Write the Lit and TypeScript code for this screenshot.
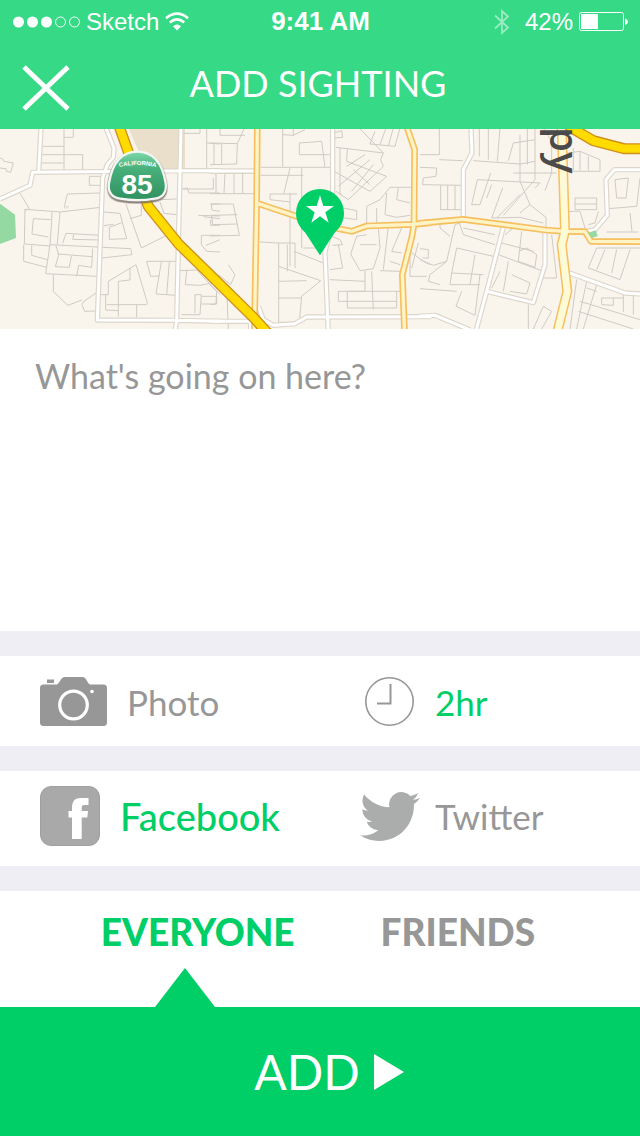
import { LitElement, html, css, svg } from "lit";
import { customElement, state } from "lit/decorators.js";

interface Tile {
  x: number;
  lanes: string;
  streets: string;
  avenues: string;
}

// Road geometry, stored per tile at three units to the pixel.
const TILES: Tile[] = [
  {
    x: 0,
    lanes: `M126 55H192M126 80H248M192 0V130M192 28H220V0M126 105H190M248 80V130
      M0 90L8 93L12 100L40 105L32 133L20 130L18 122L0 120M60 195L90 246
      M197 242L193 236L202 198L300 195M197 236L206 237
      M78 250L75 244L156 250L180 252L302 238M75 244L73 348L150 354M156 250L155 280L150 350L137 437M180 252L172 348
      M152 275L100 272L96 318L145 327M300 322L198 316L188 346M222 318L218 334L302 336
      M71 350V400L140 418M95 352V382L143 395M168 352L176 380L166 416L208 418L214 384M172 378L276 386
      M278 362L275 418L236 412L230 445M137 437L292 445M150 350L392 362L396 380L305 390
      M160 440V490L203 532L246 516M292 492L252 520L246 530L254 550L290 549
      M312 252L360 256L380 332L328 334V298L365 284M312 293L340 289
      M378 228L424 360L504 320M390 272L424 262V228
      M440 400H528M440 400L452 445L478 444M484 402L468 498L528 502M508 402L500 500
      M325 460L408 410L442 524L440 530H320M325 460V500H303M355 460V566M355 460L390 456V420M317 500V546L355 548M410 530V568
      M268 145H306M268 145V172H306M480 215L530 213M480 222L492 256L530 260
      M548 16H600V0M620 0V122M620 45L660 48M548 183L562 180L567 195H660M548 183H640V150
      M660 228H635V246L660 250M595 262L660 264M610 266L660 272M632 275V292H660
      M660 322H604V350L620 370L660 372M618 352L660 335
      M560 428L556 470L600 472L660 460M540 428L590 426L660 500M585 500H604L600 560H545M585 500V555M604 505H650V528H604`,
    streets: `M123 0L116 132M0 213L90 172L98 133L540 128H664M318 0L342 60L340 88L322 110L308 150L292 576L530 577L664 580M543 0L530 577L524 620`,
    avenues: ``,
  },
  {
    x: 210,
    lanes: `M30 0V22H105M82 47L80 108L0 110M0 45L82 47L103 0M35 48V108M12 48V108
      M18 135V195M45 135L42 195M72 135V195M98 135V195M0 136H135M0 197H135
      M0 228H70L88 322L0 324M5 262L82 260M5 262L8 290L84 288
      M218 0V115M218 20L250 22L285 5M250 22V0H370M152 118H368M152 142H280M240 120L222 195
      M268 80H360M268 80V45L335 40L345 118M275 118V360
      M180 198H262M180 198V215L240 222M240 195V415M150 342L205 345H255V420M206 345V583M280 360H330M252 370L340 405
      M206 415L332 458L275 505L268 583H206M206 510H275M232 350V430M206 460L290 458
      M372 15L395 8L398 28L375 30M378 58L520 75M390 60V200M412 62L410 100L530 145L480 190L372 130
      M378 190L415 215L520 115L512 95L520 75L448 0M480 48L495 10M480 48L555 55L570 0M510 50L528 0M535 53L550 0
      M410 115L465 80M425 190L490 110M385 175L480 95M430 125L480 170
      M375 235L440 248V275L390 268M470 290V235L510 215L540 178H605M530 195L525 260L560 268L600 262M565 178L560 215L600 225M500 240V290
      M365 325L390 335L398 350L368 352M385 350L398 420L360 425M470 320L440 325L422 378L450 428L490 422L510 360L505 298
      M535 295L520 425M450 350H500M465 428V490H385M465 460L360 455M485 430L490 545M385 490V520H560
      M412 490H575M412 490V540H560V490M510 428L570 430M575 300L545 370L575 375M540 400L570 410
      M600 370L640 400L660 410M600 375V445H650M625 345L605 420
      M0 470L20 490L18 528L0 530M55 410L75 440L62 470L25 440M50 480L55 603`,
    streets: `M0 129H135M368 0V300M362 310L345 370L355 620M0 580H122M145 535L160 575L190 592L255 587L290 567L664 566M122 580V620`,
    avenues: `M145 227L260 265L330 285L385 302L425 310L470 294L610 289L664 284M588 -10L614 65L612 289L606 325L577 440L584 620M142 -10L140 225L133 620M142 -10L140 225L133 620`,
  },
  {
    x: 420,
    lanes: `M0 80H58V0M58 95L128 98M0 118L50 120L48 145L10 150L8 170L128 172M62 172V245H128M83 172V245M105 172V245
      M178 0V85M205 0V95M240 0L232 100M160 98L300 108L345 100M265 98L280 45L345 35M300 20V160L330 230L378 268V300
      M322 0V110M345 0V155L250 262M155 230H180L212 135M155 230L172 155L360 165L345 180M200 210L215 170M300 200L230 270
      M370 0L395 40V135L375 188M280 135H410M330 230L300 255M215 270L248 180M215 270L300 268L370 285
      M440 75L480 70L540 95V130H440M460 60V128M480 70V128M505 85V128
      M445 250H480L495 300M465 210H530V245H465V210M465 228H530M505 290L525 285L535 250
      M585 155L625 150M585 155L590 210H620M625 150L618 210M660 150L650 235L565 242M630 255L636 310M560 312H655
      M660 360H530L505 420L600 455L630 365M530 425L555 365M575 435L590 365
      M60 275V300L90 325M118 285L105 290L80 400L30 440L25 460L60 470M0 395L40 412L80 400M0 362L25 365V390H8M0 482L110 490
      M130 300L225 320M118 285L130 320L225 350M110 360L220 385M110 360L95 435L90 470H180M95 435L190 440M165 380L150 470
      M125 490L108 535L165 562M180 440L165 562
      M255 320L280 300L370 310M245 345L340 370M305 310L295 400L345 418L350 380L320 360L300 368M235 380L370 430M395 320L410 450H370
      M275 440L330 465L320 498L270 490M240 430L215 480M265 400L250 490
      M325 530V603M370 535L395 550L365 603M370 535L340 603M470 455L450 603M500 460L470 603M610 498V552M545 510H610
      M545 510V530L580 532V510M475 550L640 603M480 520L660 575M640 500V560M500 480L530 490M530 470L490 603`,
    streets: `M153 0L156 75L130 125V270M252 290L200 490L165 620M200 490L340 524L375 410V306M-4 565L45 562L150 606
      M440 432L615 495L664 498M495 311L525 305L562 262L558 155L583 125H664`,
    avenues: `M-4 286L130 274L375 306L430 310L495 311L513 340L664 341`,
  },
];

const BOULEVARD = "M1685 -10L1695 310L1685 350L1702 490L1670 620";
const FREEWAY = "M352 -20L395 100L445 235L535 347L630 440L762 570L812 625M1690 -22L1715 0L1780 38L1872 62H1940";

@customElement("area-map")
class AreaMap extends LitElement {
  static styles = css`
    :host { display: block; height: 200px; background: #f9f5ed; }
    .map { display: block; width: 100%; height: 100%; }
    .line { fill: none; stroke-linejoin: round; }
    .lane { stroke: #cfcbc4; stroke-width: 3; }
    .street-edge { stroke: #ddd6ca; stroke-width: 16; }
    .street { stroke: #fff; stroke-width: 9; }
    .avenue-edge { stroke: #f6bf5f; stroke-width: 20; }
    .avenue { stroke: #fff4c6; stroke-width: 10; }
    .boulevard-edge { stroke: #f6bf5f; stroke-width: 30; }
    .boulevard { stroke: #fffad6; stroke-width: 21; }
    .freeway-edge { stroke: #cf8f1c; stroke-width: 33; }
    .freeway { stroke: #ffdb00; stroke-width: 25; }
    .park { fill: #94d8a2; }
    .block { fill: #e9dfca; }
    .place { font: 600 40px "Open Sans", "Noto Sans", sans-serif; fill: #4a4a4a; }
    .route { font: bold 84px "Liberation Sans", Arial, sans-serif; fill: #fff; text-anchor: middle; }
    .region { font: bold 18px "Liberation Sans", Arial, sans-serif; fill: #fff; text-anchor: middle; }
  `;

  private layer(key: "lanes" | "streets" | "avenues", name: string) {
    return TILES.map(
      (t) => svg`<path class="line ${name}" transform="translate(${t.x * 3} 0)" d=${t[key]} />`
    );
  }

  render() {
    return html`
      <svg class="map" viewBox="0 0 640 200" preserveAspectRatio="xMidYMid slice" role="img" aria-label="Map of the sighting">
        <defs>
          <linearGradient id="shield" x1="0" y1="0" x2="0" y2="1">
            <stop offset="0" stop-color="#7fd9ab" />
            <stop offset="0.35" stop-color="#48b07b" />
            <stop offset="1" stop-color="#2f9160" />
          </linearGradient>
        </defs>
        <g transform="translate(0 -1) scale(0.33333)">
          <path class="block" d="M385 0H555V125H440Z" />
          <path class="park" d="M0 227L45 260L48 330L0 348Z" />
          ${this.layer("lanes", "lane")}
          ${this.layer("streets", "street-edge")}
          ${this.layer("streets", "street")}
          ${this.layer("avenues", "avenue-edge")}
          <path class="line boulevard-edge" d=${BOULEVARD} />
          ${this.layer("avenues", "avenue")}
          <path class="line boulevard" d=${BOULEVARD} />
          <path class="park" d="M1763 315L1787 307L1793 324L1775 330Z" />
          <path class="line freeway-edge" d=${FREEWAY} />
          <path class="line freeway" d=${FREEWAY} />

          <path d="M412 72C470 72 493 115 501 168C505 200 491 217 465 221C430 227 395 227 360 221C334 217 319 200 323 168C331 115 354 72 412 72Z" fill="#77706a" fill-opacity="0.75" stroke="#77706a" stroke-opacity="0.35" stroke-width="5" />
          <path d="M412 71C466 71 488 112 497 165C501 192 488 208 464 212C430 218 395 218 361 212C336 208 323 192 327 165C336 112 358 71 412 71Z" fill="url(#shield)" stroke="#f4f6f4" stroke-width="7" />
          <path id="arch" d="M352 119Q412 103 474 119" fill="none" />
          <text class="region"><textPath href="#arch" startOffset="50%">CALIFORNIA</textPath></text>
          <text class="route" x="411" y="197">85</text>

          <g transform="translate(630 0)">
            <path d="M330 183A72 72 0 0 1 402 255C402 280 390 300 374 314L330 382L286 314C270 300 258 280 258 255A72 72 0 0 1 330 183Z" fill="#00ce67" />
            <path d="M330 202L340 234H372L346 253L356 284L330 265L304 284L314 253L288 234H320Z" fill="#fff" />
          </g>
        </g>
        <text class="place" transform="translate(550 -2) rotate(90)">py</text>
      </svg>
    `;
  }
}

@customElement("status-bar")
class StatusBar extends LitElement {
  static styles = css`
    :host {
      display: grid; grid-template-columns: 1fr auto 1fr; align-items: center;
      height: 43px; padding: 0 12px 0 13px; box-sizing: border-box;
      font: 24px/43px "Liberation Sans", Arial, sans-serif; color: #fff;
    }
    .side { display: flex; align-items: center; gap: 6px; }
    .end { justify-content: flex-end; }
    .time { font-weight: bold; font-size: 26px; }
    svg { display: block; }
    .bluetooth { margin-right: 9px; }
  `;

  render() {
    return html`
      <div class="side">
        <svg width="67" height="12" viewBox="0 0 67 12" aria-hidden="true">
          <g fill="#fff"><circle cx="5.5" cy="6" r="5.5" /><circle cx="19.5" cy="6" r="5.5" /><circle cx="33.5" cy="6" r="5.5" /></g>
          <g fill="none" stroke="#fff"><circle cx="47.5" cy="6" r="5" /><circle cx="61.5" cy="6" r="5" /></g>
        </svg>
        <span>Sketch</span>
        <svg width="24" height="19" viewBox="0 0 24 19" aria-hidden="true">
          <g fill="none" stroke="#fff" stroke-width="2.6">
            <path d="M1 6.2Q12 -2.8 23 6.2" /><path d="M4.8 10.4Q12 4.2 19.2 10.4" />
          </g>
          <path d="M8 14.2Q12 10.8 16 14.2L12 18.4Z" fill="#fff" />
        </svg>
      </div>
      <span class="time">9:41 AM</span>
      <div class="side end">
        <svg class="bluetooth" width="16" height="26" viewBox="0 0 16 26" aria-hidden="true">
          <path d="M1 6.5L14 18.5L8 24V2L14 7.5L1 19.5" fill="none" stroke="#fff" stroke-opacity="0.5" stroke-width="1.8" />
        </svg>
        <span>42%</span>
        <svg width="49" height="20" viewBox="0 0 49 20" aria-hidden="true">
          <rect x="0.5" y="0.5" width="44" height="18" rx="2" fill="none" stroke="#fff" />
          <rect x="2" y="2" width="17" height="15" fill="#fff" />
          <path d="M46 6.5Q49 7.5 49 9.7T46 13Z" fill="#fff" />
        </svg>
      </div>
    `;
  }
}

@customElement("app-root")
class AppRoot extends LitElement {
  @state() private audience = "everyone";
  @state() private facebook = true;
  @state() private twitter = false;

  static styles = css`
    :host {
      display: flex; flex-direction: column; min-height: 100vh;
      background: #efeef4; color: #979797;
      font-family: Lato, "Open Sans", sans-serif;
    }
    button {
      margin: 0; padding: 0; border: 0; background: none; color: inherit;
      font: inherit; text-align: left; cursor: pointer;
    }
    svg { display: block; flex: none; }
    .header { background: #36d986; color: #fff; }
    .nav {
      display: grid; grid-template-columns: 1fr auto 1fr; align-items: start;
      padding: 22px 26px 18px 22px;
    }
    .title { margin: 0; font-size: 36px; line-height: 36px; font-weight: 400; }
    .close { justify-self: start; }
    .note {
      flex: 1; min-height: 120px; box-sizing: border-box; width: 100%; display: block;
      margin: 0; padding: 27px 35px; border: 0; outline: 0; resize: none; border-radius: 0;
      background: #fff; color: #555; font: 34px/40px Lato, "Open Sans", sans-serif;
    }
    .note::placeholder { color: #979797; opacity: 1; }
    .row {
      display: grid; grid-template-columns: 1fr 1fr; margin-top: 25px;
      background: #fff; font-size: 35px; line-height: 40px;
    }
    .details { padding: 21px 0 20px; }
    .share { padding: 15px 0 20px; }
    .option { display: flex; align-items: center; gap: 20px; padding-left: 40px; }
    .option + .option { gap: 15px; }
    .on { color: #00ce67; }
    .share .on { font-size: 38px; font-weight: 500; }
    .tabs {
      display: flex; justify-content: center; gap: 86px; margin-top: 25px; padding-right: 4px;
      background: #fff; font-size: 37px; line-height: 40px; font-weight: 900;
    }
    .tab { position: relative; padding: 21px 0 55px; }
    .marker { position: absolute; left: 54px; bottom: 0; }
    .add {
      display: flex; align-items: center; justify-content: center; gap: 14px;
      padding: 35px 0 34px 18px; background: #00ce67; color: #fff;
      font-size: 48px; line-height: 60px; font-weight: 400;
    }
  `;

  private tab(id: string, label: string) {
    const active = this.audience === id;
    return html`
      <button class="tab ${active ? "on" : ""}" role="tab" aria-selected=${active} @click=${() => (this.audience = id)}>
        ${label}
        ${active
          ? html`<svg class="marker" width="60" height="39" viewBox="0 0 60 39" aria-hidden="true"><path d="M30 0L60 39H0Z" fill="#00ce67" /></svg>`
          : ""}
      </button>
    `;
  }

  render() {
    return html`
      <header class="header">
        <status-bar></status-bar>
        <div class="nav">
          <button class="close" aria-label="Close">
            <svg width="48" height="46" viewBox="0 0 48 46"><path d="M2 2L46 44M46 2L2 44" stroke="#fff" stroke-width="5" /></svg>
          </button>
          <h1 class="title">ADD SIGHTING</h1>
        </div>
      </header>
      <area-map></area-map>
      <textarea class="note" aria-label="Description" placeholder="What's going on here?"></textarea>

      <div class="row details">
        <button class="option">
          <svg width="67" height="49" viewBox="0 0 67 49" aria-hidden="true">
            <path d="M7 2.5H14V6H7Z" fill="#979797" />
            <path d="M3.5 7.5H17C20 6 20.5 0 25 0H42.5C46.5 0 47 6 50 7.5H63.5Q67 7.5 67 11V45.5Q67 49 63.5 49H3.5Q0 49 0 45.5V11Q0 7.5 3.5 7.5Z" fill="#979797" />
            <circle cx="33.5" cy="28" r="13.8" fill="none" stroke="#fff" stroke-width="3.2" />
            <circle cx="52" cy="14.5" r="1.8" fill="#fff" />
          </svg>
          <span>Photo</span>
        </button>
        <button class="option on">
          <svg width="60" height="49" viewBox="0 0 60 49" aria-hidden="true">
            <g fill="none" stroke="#979797"><circle cx="29.5" cy="24.5" r="23.7" stroke-width="1.6" /><path d="M30.5 7V26.5H17" stroke-width="2" /></g>
          </svg>
          <span>2hr</span>
        </button>
      </div>

      <div class="row share">
        <button class="option ${this.facebook ? "on" : ""}" aria-pressed=${this.facebook} @click=${() => (this.facebook = !this.facebook)}>
          <svg width="60" height="60" viewBox="0 0 60 60" aria-hidden="true">
            <rect x="0.5" y="0.5" width="59" height="59" rx="10.5" fill="#a9a9a9" stroke="#9f9f9f" />
            <path d="M32 53V31.5H28.5V25H32V21.5C32 15 35 12 41 12H48.5V19H44C42.3 19 41.7 20 41.7 21.5V25H48L47.3 31.5H41.7V53Z" fill="#fff" />
          </svg>
          <span>Facebook</span>
        </button>
        <button class="option ${this.twitter ? "on" : ""}" aria-pressed=${this.twitter} @click=${() => (this.twitter = !this.twitter)}>
          <svg width="60" height="49" viewBox="0 2.25 24 19.5" aria-hidden="true">
            <path fill="#abadac" d="M23.953 4.57a10 10 0 01-2.825.775 4.958 4.958 0 002.163-2.723c-.951.555-2.005.959-3.127 1.184a4.92 4.92 0 00-8.384 4.482C7.69 8.095 4.067 6.13 1.64 3.162a4.822 4.822 0 00-.666 2.475c0 1.71.87 3.213 2.188 4.096a4.904 4.904 0 01-2.228-.616v.06a4.923 4.923 0 003.946 4.827 4.996 4.996 0 01-2.212.085 4.936 4.936 0 004.604 3.417 9.867 9.867 0 01-6.102 2.105c-.39 0-.779-.023-1.17-.067a13.995 13.995 0 007.557 2.209c9.053 0 13.998-7.496 13.998-13.985 0-.21 0-.42-.015-.63A9.935 9.935 0 0024 4.59z" />
          </svg>
          <span>Twitter</span>
        </button>
      </div>

      <div class="tabs" role="tablist">
        ${this.tab("everyone", "EVERYONE")} ${this.tab("friends", "FRIENDS")}
      </div>

      <button class="add">
        <span>ADD</span>
        <svg width="30" height="36" viewBox="0 0 30 36" aria-hidden="true"><path d="M0 0L30 18L0 36Z" fill="#fff" /></svg>
      </button>
    `;
  }
}
